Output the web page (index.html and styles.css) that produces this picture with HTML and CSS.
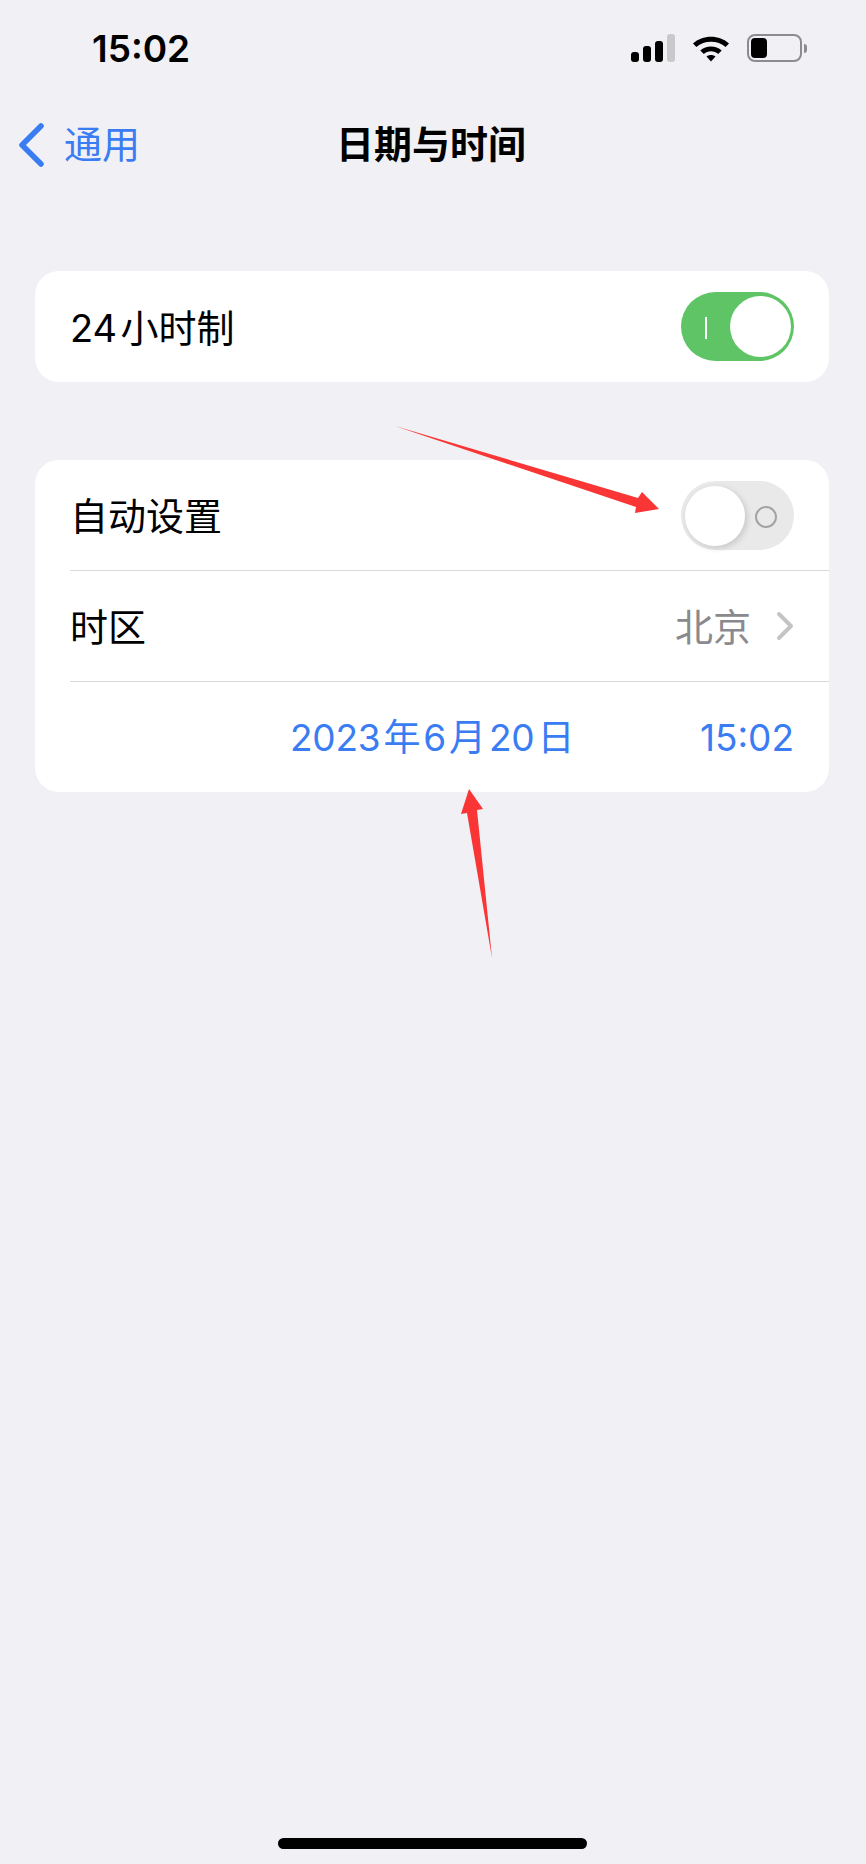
FILE: index.html
```html
<!DOCTYPE html>
<html lang="zh-CN">
<head>
    <meta charset="UTF-8">
    <meta name="viewport" content="width=device-width, initial-scale=1.0">
    <title>日期与时间</title>
    <link rel="stylesheet" href="styles.css">
</head>
<body>
<div class="screen">
    <div class="statusbar">
        <span class="clock">15:02</span>
        <div class="status-icons">
            <div class="signal">
                <span class="bar bar1"></span>
                <span class="bar bar2"></span>
                <span class="bar bar3"></span>
                <span class="bar bar4"></span>
            </div>
            <svg class="wifi" width="38" height="28" viewBox="0 0 38 28">
                <path d="M1 9.5C10.5 .5 27.5 .5 37 9.5L33.6 13C26 6 12 6 4.400 13Z" fill="#000"/>
                <path d="M8.300 16.500C14 11 24 11 29.700 16.500L26.200 20C22 16.300 16 16.300 11.800 20Z" fill="#000"/>
                <path d="M14.500 22.500C17 20.500 21 20.500 23.500 22.500L19 27.500Z" fill="#000"/>
            </svg>
            <div class="battery">
                <div class="battery-body"><span class="battery-level"></span></div>
                <span class="battery-nub"></span>
            </div>
        </div>
    </div>

    <div class="navbar">
        <a class="back">
            <svg width="26" height="44" viewBox="0 0 26 44">
                <path d="M22 3L3 22L22 41" fill="none" stroke="#3a7cf2" stroke-width="5.500" stroke-linecap="round" stroke-linejoin="round"/>
            </svg>
            <span class="back-text">通用</span>
        </a>
        <h1>日期与时间</h1>
    </div>

    <div class="card card-first">
        <div class="row">
            <span class="label">24&#8202;小时制</span>
            <div class="toggle toggle-on">
                <span class="on-mark"></span>
                <span class="knob"></span>
            </div>
        </div>
    </div>

    <div class="card">
        <div class="row">
            <span class="label">自动设置</span>
            <div class="toggle toggle-off">
                <span class="knob"></span>
                <span class="off-mark"></span>
            </div>
        </div>
        <div class="row">
            <span class="label">时区</span>
            <div class="value">
                <span class="label">北京</span>
                <svg width="18" height="30" viewBox="0 0 18 30">
                    <path d="M3 3L15 15L3 27" fill="none" stroke="#c4c4c7" stroke-width="4" stroke-linecap="round" stroke-linejoin="round"/>
                </svg>
            </div>
        </div>
        <div class="row row-date">
            <span class="date">2023&#8202;年&#8202;6&#8202;月&#8202;20&#8202;日</span>
            <span>15:02</span>
        </div>
    </div>

    <div class="home-bar"></div>

    <!-- red arrows drawn over the screenshot -->
    <svg class="arrows" width="866" height="1864" viewBox="0 0 866 1864">
        <path d="M395 426L638 498L642 492L659 509L635 513L636 507Z" fill="#f93535"/>
        <path d="M469 789L483 809L477 810L492 958L467 813L461 814Z" fill="#f93535"/>
    </svg>
</div>
</body>
</html>
```

FILE: styles.css
```css
body {
    margin: 0;
    background: #f0f0f5;
    font-family: Inter, "Noto Sans CJK SC", sans-serif;
    color: #000;
}
.screen {
    position: relative;
    width: 866px;
    height: 1864px;
    overflow: hidden;
}
.statusbar {
    height: 97px;
    display: flex;
    justify-content: space-between;
    align-items: flex-start;
    padding: 27px 59px 0 92px;
    box-sizing: border-box;
}
.clock {
    font-size: 37px;
    font-weight: 600;
    line-height: 43px;
}
.status-icons {
    display: flex;
    align-items: center;
    gap: 17px;
    margin-top: 7px;
}
.signal {
    display: flex;
    align-items: flex-end;
    gap: 4px;
    height: 28px;
}
.bar {
    width: 8px;
    background: #000;
    border-radius: 3px;
}
.bar1 { height: 10px; }
.bar2 { height: 16px; }
.bar3 { height: 21px; }
.bar4 { height: 28px; background: #c9c9cb; }
.battery {
    display: flex;
    align-items: center;
    gap: 2px;
}
.battery-body {
    width: 55px;
    height: 28px;
    border: 2px solid #8c8c8f;
    border-radius: 8px;
    box-sizing: border-box;
    padding: 2px;
}
.battery-level {
    display: block;
    width: 16px;
    height: 100%;
    background: #000;
    border-radius: 4px;
}
.battery-nub {
    width: 3px;
    height: 9px;
    background: #8c8c8f;
    border-radius: 0 3px 3px 0;
}
.navbar {
    height: 96px;
    display: grid;
    grid-template-columns: 1fr auto 1fr;
    align-items: center;
    padding-left: 19px;
}
.back {
    display: flex;
    align-items: center;
    gap: 19px;
    color: #3a7cf2;
    font-size: 38px;
}
.back-text {
    margin-bottom: 7px;
}
h1 {
    margin: 0 23px 7px 0;
    font-size: 38px;
    font-weight: 700;
}
.card {
    background: #fff;
    border-radius: 24px;
    margin: 0 37px 0 35px;
}
.card-first {
    margin-top: 78px;
    margin-bottom: 78px;
}
.row {
    height: 111px;
    display: flex;
    align-items: center;
    justify-content: space-between;
    margin-left: 35px;
    padding-right: 35px;
    font-size: 38px;
    box-sizing: border-box;
    border-bottom: 1px solid #d9d9dc;
}
.row span {
    line-height: 1;
}
.row .label {
    margin-top: 2px;
}
.row:last-child {
    border-bottom: none;
}
.row-date {
    height: 110px;
    color: #3a7cf2;
    font-size: 37px;
    margin-left: 255px;
}
.date {
    letter-spacing: -0.25px;
}
.value {
    display: flex;
    align-items: center;
    gap: 25px;
    color: #8a8a8e;
}
.toggle {
    position: relative;
    width: 113px;
    height: 69px;
    border-radius: 35px;
    box-sizing: border-box;
}
.toggle-on {
    background: #5fc466;
}
.toggle-off {
    background: #e9e9ea;
}
.knob {
    position: absolute;
    border-radius: 50%;
    background: #fff;
}
.toggle-on .knob {
    right: 3px;
    top: 4px;
    width: 61px;
    height: 61px;
}
.toggle-off .knob {
    left: 4px;
    top: 5px;
    width: 60px;
    height: 60px;
    box-shadow: 2px 2px 6px rgba(0, 0, 0, 0.15);
}
.on-mark {
    position: absolute;
    left: 24px;
    top: 25px;
    width: 2px;
    height: 22px;
    background: #fff;
}
.off-mark {
    position: absolute;
    right: 17px;
    top: 25px;
    width: 22px;
    height: 22px;
    border: 2px solid #a3a3a5;
    border-radius: 50%;
    box-sizing: border-box;
}
.home-bar {
    position: absolute;
    left: 278px;
    top: 1838px;
    width: 309px;
    height: 11px;
    background: #000;
    border-radius: 6px;
}
.arrows {
    position: absolute;
    left: 0;
    top: 0;
}
```
